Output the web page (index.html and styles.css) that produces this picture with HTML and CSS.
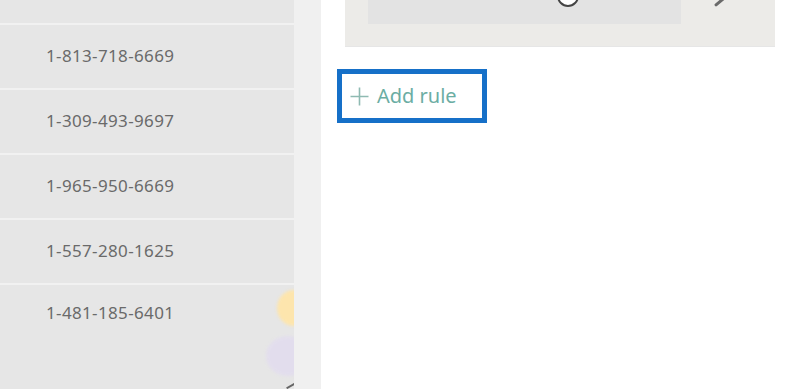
FILE: index.html
```html
<!DOCTYPE html>
<html>
<head>
<meta charset="utf-8">
<link rel="stylesheet" href="styles.css">
</head>
<body>
<div class="page">
  <div class="list">
    <div class="row row-top"></div>
    <div class="row"><span>1-813-718-6669</span></div>
    <div class="row"><span>1-309-493-9697</span></div>
    <div class="row"><span>1-965-950-6669</span></div>
    <div class="row"><span>1-557-280-1625</span></div>
    <div class="row row-last"><span>1-481-185-6401</span></div>
    <div class="blob blob-yellow"></div>
    <div class="blob blob-lilac"></div>
    <div class="tick"></div>
  </div>
  <div class="strip"></div>
  <div class="pane">
    <div class="card">
      <div class="field">
        <div class="knob"></div>
      </div>
      <div class="pencil"></div>
    </div>
    <div class="add">
      <svg class="plus" width="19" height="19" viewBox="0 0 19 19"><path d="M9.5 0.5 V18.5 M0.5 9.5 H18.5" stroke="#8fbab2" stroke-width="1.6"/></svg>
      <span>Add rule</span>
    </div>
  </div>
</div>
</body>
</html>
```
FILE: styles.css
```css
html, body {
  margin: 0;
  padding: 0;
  background: #ffffff;
}
.page {
  display: flex;
  width: 800px;
  height: 389px;
  overflow: hidden;
  font-family: "Noto Sans", "Open Sans", sans-serif;
}
.list {
  position: relative;
  width: 294px;
  background: #e6e6e6;
  display: flex;
  flex-direction: column;
  overflow: hidden;
}
.row {
  height: 63px;
  border-bottom: 2px solid #f1f1f1;
  display: flex;
  align-items: center;
  padding-left: 46px;
  font-size: 17px;
  letter-spacing: 0.35px;
  color: #6a6a6a;
  box-sizing: content-box;
}
.row span { margin-top: -3px; }
.row-top { height: 23px; }
.row-last {
  height: 62px;
  border-bottom: none;
  align-items: flex-start;
  padding-top: 16px;
}
.row-last span { margin-top: 0; }
.blob {
  position: absolute;
  border-radius: 50%;
  filter: blur(1.5px);
}
.blob-yellow {
  left: 277px;
  top: 290px;
  width: 34px;
  height: 36px;
  background: #fde5ad;
}
.blob-lilac {
  left: 266px;
  top: 336px;
  width: 44px;
  height: 40px;
  background: #e2dcef;
  opacity: 0.8;
}
.tick {
  position: absolute;
  left: 286px;
  top: 385px;
  width: 9px;
  height: 2px;
  background: #666;
  transform: rotate(-30deg);
}
.strip {
  width: 27px;
  background: #f0f0f0;
}
.pane {
  flex: 1;
  background: #ffffff;
  display: flex;
  flex-direction: column;
  align-items: flex-start;
}
.card {
  margin-left: 24px;
  width: 430px;
  height: 47px;
  background: #ecebe8;
  border-bottom: 1px solid #e6e6e6;
  box-sizing: border-box;
  display: flex;
  align-items: flex-start;
  position: relative;
}
.field {
  margin-left: 23px;
  width: 313px;
  height: 24px;
  background: #e3e3e3;
  position: relative;
}
.knob {
  position: absolute;
  left: 189px;
  top: -15px;
  width: 18px;
  height: 18px;
  border: 2px solid #444;
  border-radius: 50%;
  background: #fff;
}
.pencil {
  margin-left: 37px;
  margin-top: -4px;
  width: 3px;
  height: 12px;
  background: #6a6a6a;
  border-radius: 1px 1px 2px 2px;
  transform: rotate(50deg);
}
.add {
  margin-top: 22px;
  margin-left: 16px;
  width: 150px;
  height: 54px;
  box-sizing: border-box;
  border: 5px solid #1670c8;
  display: flex;
  align-items: center;
  padding-left: 8px;
  gap: 8px;
  color: #6bada3;
  font-family: "Noto Sans", "Open Sans", sans-serif;
  font-size: 20px;
}
.add span { margin-top: -1px; }
.plus { flex: none; }
```
